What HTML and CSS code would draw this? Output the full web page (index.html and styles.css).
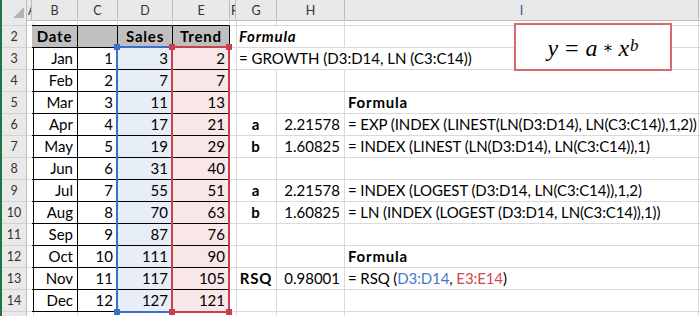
FILE: index.html
```html
<!DOCTYPE html>
<html lang="en">
<head>
  <meta charset="UTF-8" />
  <title>GROWTH power trend</title>
  <link rel="stylesheet" href="styles.css">
</head>
<body>
  <div class="sheet">
    <div class="row head">
      <div class="ch corner"><svg width="25" height="19" viewBox="0 0 25 19"><polygon points="22,6 22,17 11,17" fill="#b4b4b4"/></svg></div>
      <div class="ch clip">A</div>
      <div class="ch">B</div>
      <div class="ch">C</div>
      <div class="ch">D</div>
      <div class="ch">E</div>
      <div class="ch clip">F</div>
      <div class="ch">G</div>
      <div class="ch">H</div>
      <div class="ch sel">I</div>
      <div class="ch"></div>
    </div>

    <div class="row r1">
      <div class="rh"></div>
      <div></div>
      <div class="tt"></div>
      <div class="tt"></div>
      <div class="tt"></div>
      <div class="tt"></div>
      <div></div><div></div><div></div><div></div><div></div>
    </div>

    <div class="row">
      <div class="rh">2</div>
      <div class="tl"></div>
      <div class="t th">Date</div>
      <div class="t th"></div>
      <div class="t th">Sales</div>
      <div class="t th">Trend</div>
      <div></div>
      <div class="bi nb">Formula</div>
      <div></div><div></div><div></div>
    </div>

    <div class="row">
      <div class="rh">3</div>
      <div class="tl"></div>
      <div class="t r">Jan</div><div class="t r">1</div><div class="t r blue">3</div><div class="t r pink">2</div>
      <div></div>
      <div class="nb">= GROWTH (D3:D14, LN (C3:C14))</div>
      <div class="nb"></div><div></div><div></div>
    </div>

    <div class="row">
      <div class="rh">4</div>
      <div class="tl"></div>
      <div class="t r">Feb</div><div class="t r">2</div><div class="t r blue">7</div><div class="t r pink">7</div>
      <div></div><div></div><div></div><div></div><div></div>
    </div>

    <div class="row">
      <div class="rh">5</div>
      <div class="tl"></div>
      <div class="t r">Mar</div><div class="t r">3</div><div class="t r blue">11</div><div class="t r pink">13</div>
      <div></div><div></div><div></div>
      <div class="b">Formula</div>
      <div></div>
    </div>

    <div class="row">
      <div class="rh">6</div>
      <div class="tl"></div>
      <div class="t r">Apr</div><div class="t r">4</div><div class="t r blue">17</div><div class="t r pink">21</div>
      <div></div>
      <div class="b m">a</div>
      <div class="r">2.21578</div>
      <div class="f">= EXP (INDEX (LINEST(LN(D3:D14), LN(C3:C14)),1,2))</div>
      <div></div>
    </div>

    <div class="row">
      <div class="rh">7</div>
      <div class="tl"></div>
      <div class="t r">May</div><div class="t r">5</div><div class="t r blue">19</div><div class="t r pink">29</div>
      <div></div>
      <div class="b m">b</div>
      <div class="r">1.60825</div>
      <div class="f">= INDEX (LINEST (LN(D3:D14), LN(C3:C14)),1)</div>
      <div></div>
    </div>

    <div class="row">
      <div class="rh">8</div>
      <div class="tl"></div>
      <div class="t r">Jun</div><div class="t r">6</div><div class="t r blue">31</div><div class="t r pink">40</div>
      <div></div><div></div><div></div><div></div><div></div>
    </div>

    <div class="row">
      <div class="rh">9</div>
      <div class="tl"></div>
      <div class="t r">Jul</div><div class="t r">7</div><div class="t r blue">55</div><div class="t r pink">51</div>
      <div></div>
      <div class="b m">a</div>
      <div class="r">2.21578</div>
      <div class="f">= INDEX (LOGEST (D3:D14, LN(C3:C14)),1,2)</div>
      <div></div>
    </div>

    <div class="row">
      <div class="rh">10</div>
      <div class="tl"></div>
      <div class="t r">Aug</div><div class="t r">8</div><div class="t r blue">70</div><div class="t r pink">63</div>
      <div></div>
      <div class="b m">b</div>
      <div class="r">1.60825</div>
      <div class="f">= LN (INDEX (LOGEST (D3:D14, LN(C3:C14)),1))</div>
      <div></div>
    </div>

    <div class="row">
      <div class="rh">11</div>
      <div class="tl"></div>
      <div class="t r">Sep</div><div class="t r">9</div><div class="t r blue">87</div><div class="t r pink">76</div>
      <div></div><div></div><div></div><div></div><div></div>
    </div>

    <div class="row">
      <div class="rh">12</div>
      <div class="tl"></div>
      <div class="t r">Oct</div><div class="t r">10</div><div class="t r blue">111</div><div class="t r pink">90</div>
      <div></div><div></div><div></div>
      <div class="b">Formula</div>
      <div></div>
    </div>

    <div class="row">
      <div class="rh">13</div>
      <div class="tl"></div>
      <div class="t r">Nov</div><div class="t r">11</div><div class="t r blue">117</div><div class="t r pink">105</div>
      <div></div>
      <div class="b m">RSQ</div>
      <div class="r">0.98001</div>
      <div class="f">= RSQ (<span class="ref1">D3:D14</span>, <span class="ref2">E3:E14</span>)</div>
      <div></div>
    </div>

    <div class="row">
      <div class="rh">14</div>
      <div class="tl"></div>
      <div class="t r">Dec</div><div class="t r">12</div><div class="t r blue">127</div><div class="t r pink">121</div>
      <div></div><div></div><div></div><div></div><div></div>
    </div>

    <div class="row">
      <div class="rh"></div>
      <div></div><div></div><div></div><div></div><div></div>
      <div></div><div></div><div></div><div></div><div></div>
    </div>

    <!-- reference highlight for the cell being edited -->
    <div class="range rng-d"></div>
    <div class="range rng-e"></div>
    <div class="handle hd" style="left:112px; top:44px"></div>
    <div class="handle hd" style="left:112px; top:309px"></div>
    <div class="handle he" style="left:167px; top:44px"></div>
    <div class="handle he" style="left:224px; top:44px"></div>
    <div class="handle he" style="left:167px; top:309px"></div>
    <div class="handle he" style="left:224px; top:309px"></div>

    <div class="equation">
      <i>y</i><span class="op">=</span><i>a</i><span class="op star">∗</span><i>x</i><sup><i>b</i></sup>
    </div>
  </div>
</body>
</html>
```

FILE: styles.css
```css
* {
  box-sizing: border-box;
}

body {
  margin: 0;
  background: #fff;
  color: #000;
  font-family: Lato, "Open Sans", sans-serif;
  overflow: hidden;
}

.sheet {
  position: relative;
  width: 700px;
  height: 316px;
  overflow: hidden;
  border-left: 2px solid #217346;
}

.row {
  display: grid;
  grid-template-columns: 25px 5px 46px 40px 55px 57px 6px 41px 68px 354px 40px;
  height: 22px;
}

.row.head {
  height: 20px;
}

.row.r1 {
  height: 6px;
}

.row > div {
  border-right: 1px solid #dadada;
  border-bottom: 1px solid #dadada;
  font-size: 15px;
  line-height: 21px;
  white-space: nowrap;
  padding: 0 3px;
}

/* headers */
.row > .ch,
.row > .rh {
  background: #e9e9e9;
  border-right-color: #bdbdbd;
  border-bottom-color: #bdbdbd;
  color: #333;
  font-size: 12.5px;
  text-align: center;
  padding: 0;
}

.row > .ch {
  line-height: 19px;
  padding-top: 1px;
}

.row > .rh {
  border-bottom-color: #d2d2d2;
}

.row > .clip {
  overflow: hidden;
  text-align: left;
  padding-left: 1px;
}

.row > .sel {
  color: #2a5a9a;
}

.corner svg {
  display: block;
}

/* data table */
.row > .t {
  border-right-color: #000;
  border-bottom-color: #000;
}

.row > .tl {
  border-right-color: #000;
}

.row > .tt {
  border-bottom-color: #000;
}

.th {
  background: #bfbfbf;
  font-weight: bold;
  text-align: center;
  letter-spacing: 0.8px;
}

.blue { background: #e7eef8; }
.pink { background: #f8e6e8; }

.row > .r {
  text-align: right;
  padding-right: 4px;
}

.m { text-align: center; }
.b { font-weight: bold; letter-spacing: 0.8px; }
.bi { font-weight: bold; font-style: italic; letter-spacing: 0.8px; }
.f { letter-spacing: -0.1px; }

.row > .nb {
  border-right-color: transparent;
}

.ref1 { color: #4a78c8; }
.ref2 { color: #cc4850; }

/* range outlines */
.range {
  position: absolute;
  top: 46px;
  height: 267px;
  border: 2px solid;
}

.rng-d {
  left: 114px;
  width: 57px;
  border-color: #3c6fc8;
}

.rng-e {
  left: 169px;
  width: 59px;
  border-color: #c8414a;
}

.handle {
  position: absolute;
  width: 6px;
  height: 6px;
}

.hd { background: #3c6fc8; }
.he { background: #c8414a; }

/* equation shape */
.equation {
  position: absolute;
  left: 512px;
  top: 23px;
  width: 158px;
  height: 48px;
  background: #fff;
  border: 2px solid #d66a6a;
  display: flex;
  align-items: center;
  justify-content: center;
  font-family: "Liberation Serif", "DejaVu Serif", serif;
  font-size: 24px;
  line-height: 1;
  padding-top: 2px;
}

.equation .op {
  font-style: normal;
  margin: 0 7px;
}

.equation .star {
  margin: 0 5px;
  font-family: "DejaVu Serif", serif;
  font-size: 16px;
}

.equation sup {
  font-size: 17px;
  position: relative;
  top: -3px;
  margin-left: 1px;
}
```
